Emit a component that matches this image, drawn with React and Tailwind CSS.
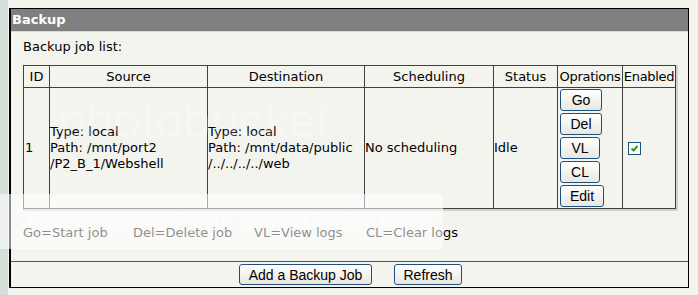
import React from "react";

const vf = { fontFamily: '"DejaVu Sans", Verdana, sans-serif' };

function Btn({ children, w }) {
  return (
    <button
      className={`h-[22px] ${w} rounded-[3px] border border-[#1f4f7f] bg-gradient-to-b from-[#ffffff] to-[#e8e8e0] text-[14px] leading-none text-black`}
      style={{ fontFamily: '"Liberation Sans", Arial, sans-serif' }}
    >
      {children}
    </button>
  );
}

export default function App() {
  return (
    <div className="relative h-[295px] w-[698px] overflow-hidden bg-[#f4f4ef] text-[13px] text-black" style={vf}>
      <div className="absolute left-0 top-0 h-full w-[8px] bg-[#d4dfdc]" />
      <div className="flex h-full">
        <div className="ml-[9px] mt-[8px] flex h-[280px] w-[680px] flex-col border border-l-2 border-black">
          <div className="h-[22px] bg-[#808080] pl-[1px] text-[13px] font-bold leading-[22px] text-white">Backup</div>
          <div className="h-[1px] bg-[#d8d8d8]" />
          <div className="flex flex-1 flex-col px-[12px]">
            <div className="mt-[7px] h-[16px] leading-[16px]">Backup job list:</div>
            <div className="mt-[10px] w-[655px] border-b-2 border-r-2 border-[#d0d0d0]">
              <table className="w-[652px] table-fixed border-collapse">
                <colgroup>
                  <col className="w-[26px]" />
                  <col className="w-[158px]" />
                  <col className="w-[157px]" />
                  <col className="w-[129px]" />
                  <col className="w-[64px]" />
                  <col className="w-[65px]" />
                  <col className="w-[53px]" />
                </colgroup>
                <thead>
                  <tr className="h-[22px] text-center">
                    <th className="border border-[#404040] p-0 font-normal">ID</th>
                    <th className="border border-[#404040] p-0 font-normal">Source</th>
                    <th className="border border-[#404040] p-0 font-normal">Destination</th>
                    <th className="border border-[#404040] p-0 font-normal">Scheduling</th>
                    <th className="border border-[#404040] p-0 font-normal">Status</th>
                    <th className="border border-[#404040] p-0 font-normal tracking-[-0.3px]">Oprations</th>
                    <th className="border border-[#404040] p-0 font-normal tracking-[-0.3px]">Enabled</th>
                  </tr>
                </thead>
                <tbody>
                  <tr className="h-[121px] leading-[16px]">
                    <td className="border border-[#404040] px-[1px]">1</td>
                    <td className="border border-[#404040] px-0 whitespace-nowrap">
                      Type: local<br />Path: /mnt/port2<br />/P2_B_1/Webshell
                    </td>
                    <td className="border border-[#404040] px-0 whitespace-nowrap">
                      Type: local<br />Path: /mnt/data/public<br />/../../../../web
                    </td>
                    <td className="border border-[#404040] px-0 whitespace-nowrap">No scheduling</td>
                    <td className="border border-[#404040] px-0">Idle</td>
                    <td className="border border-[#404040] px-[2px] py-[1px]">
                      <div className="flex flex-col items-start gap-[2px]">
                        <Btn w="w-[42px]">Go</Btn>
                        <Btn w="w-[42px]">Del</Btn>
                        <Btn w="w-[40px]">VL</Btn>
                        <Btn w="w-[40px]">CL</Btn>
                        <Btn w="w-[44px]">Edit</Btn>
                      </div>
                    </td>
                    <td className="border border-[#404040] pl-[5px]">
                      <span className="flex h-[13px] w-[13px] items-center justify-center border border-[#1c5180] bg-white">
                        <svg width="9" height="9" viewBox="0 0 9 9">
                          <path d="M1.5 4.5 L3.5 6.5 L7.5 2" fill="none" stroke="#21a121" strokeWidth="2" />
                        </svg>
                      </span>
                    </td>
                  </tr>
                </tbody>
              </table>
            </div>
            <div className="mt-[14px] flex h-[16px] leading-[16px]">
              <span className="w-[110px]">Go=Start job</span>
              <span className="w-[121px]">Del=Delete job</span>
              <span className="w-[112px]">VL=View logs</span>
              <span>CL=Clear logs</span>
            </div>
          </div>
          <div className="h-[1px] bg-[#555555]" />
          <div className="flex h-[25px] items-center justify-center gap-[22px] pl-[2px]">
            <button
              className="h-[21px] w-[133px] rounded-[3px] border border-[#1f4f7f] bg-gradient-to-b from-[#ffffff] to-[#e8e8e0] text-[14px] leading-none"
              style={{ fontFamily: '"Liberation Sans", Arial, sans-serif' }}
            >
              Add a Backup Job
            </button>
            <button
              className="h-[21px] w-[68px] rounded-[3px] border border-[#1f4f7f] bg-gradient-to-b from-[#ffffff] to-[#e8e8e0] text-[14px] leading-none"
              style={{ fontFamily: '"Liberation Sans", Arial, sans-serif' }}
            >
              Refresh
            </button>
          </div>
        </div>
      </div>
      {/* watermark overlay */}
      <div className="pointer-events-none absolute left-[58px] top-[96px] whitespace-nowrap text-[50px] leading-none text-white/20" style={{ fontFamily: '"Liberation Sans", Arial, sans-serif' }}>
        photobucket
      </div>
      <div className="pointer-events-none absolute left-0 top-[194px] h-[55px] w-[443px] bg-white/55">
        <div className="whitespace-nowrap pl-[28px] pt-[15px] text-[21px] font-bold leading-none text-white/60" style={{ fontFamily: '"Liberation Sans", Arial, sans-serif' }}>
          Protect more of your memories for less!
        </div>
      </div>
    </div>
  );
}
